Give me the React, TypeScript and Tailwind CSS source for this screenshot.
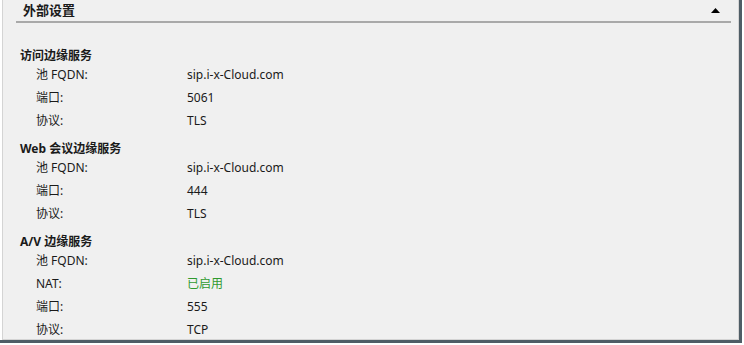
const font = { fontFamily: '"Noto Sans", "Noto Sans CJK SC", sans-serif' }

type Row = { label: string; value: string; green?: boolean }

const sections: { title: string; rows: Row[] }[] = [
  {
    title: '访问边缘服务',
    rows: [
      { label: '池 FQDN:', value: 'sip.i-x-Cloud.com' },
      { label: '端口:', value: '5061' },
      { label: '协议:', value: 'TLS' },
    ],
  },
  {
    title: 'Web 会议边缘服务',
    rows: [
      { label: '池 FQDN:', value: 'sip.i-x-Cloud.com' },
      { label: '端口:', value: '444' },
      { label: '协议:', value: 'TLS' },
    ],
  },
  {
    title: 'A/V 边缘服务',
    rows: [
      { label: '池 FQDN:', value: 'sip.i-x-Cloud.com' },
      { label: 'NAT:', value: '已启用', green: true },
      { label: '端口:', value: '555' },
      { label: '协议:', value: 'TCP' },
    ],
  },
]

export default function App() {
  return (
    <div className="w-[744px] h-[345px] bg-white overflow-hidden" style={font}>
      <div className="w-[742px] h-[343px] border-r-[3px] border-b-[3px] border-[#4f5d66]">
        <div className="h-full overflow-hidden bg-[#f0f0f0] ml-[2px] border-l border-r border-b border-[#d4d4d4] text-[12px] text-[#1a1a1a]">
          <div className="ml-[13px] mr-[7px] h-[23px] border-b-2 border-[#a9a9a9] flex items-start">
            <span className="ml-[7px] mt-[2px] h-[16px] leading-[16px] font-bold text-[13px]">外部设置</span>
            <svg className="ml-auto mr-[11px] mt-[8px]" width="9" height="5" viewBox="0 0 9 5">
              <path d="M0 5 L4.5 0 L9 5 Z" fill="#000" />
            </svg>
          </div>
          <div className="mt-[26px]">
            {sections.map((s, i) => (
              <div key={s.title} className={i > 0 ? 'mt-[10px]' : ''}>
                <div className="pl-[17px] h-[14px] flex items-center font-bold">{s.title}</div>
                {s.rows.map((r) => (
                  <div key={r.label} className="flex h-[23px] items-center">
                    <span className="pl-[33px] w-[184px]">{r.label}</span>
                    <span className={r.green ? 'text-[#2f9a2f]' : ''}>{r.value}</span>
                  </div>
                ))}
              </div>
            ))}
          </div>
        </div>
      </div>
    </div>
  )
}
